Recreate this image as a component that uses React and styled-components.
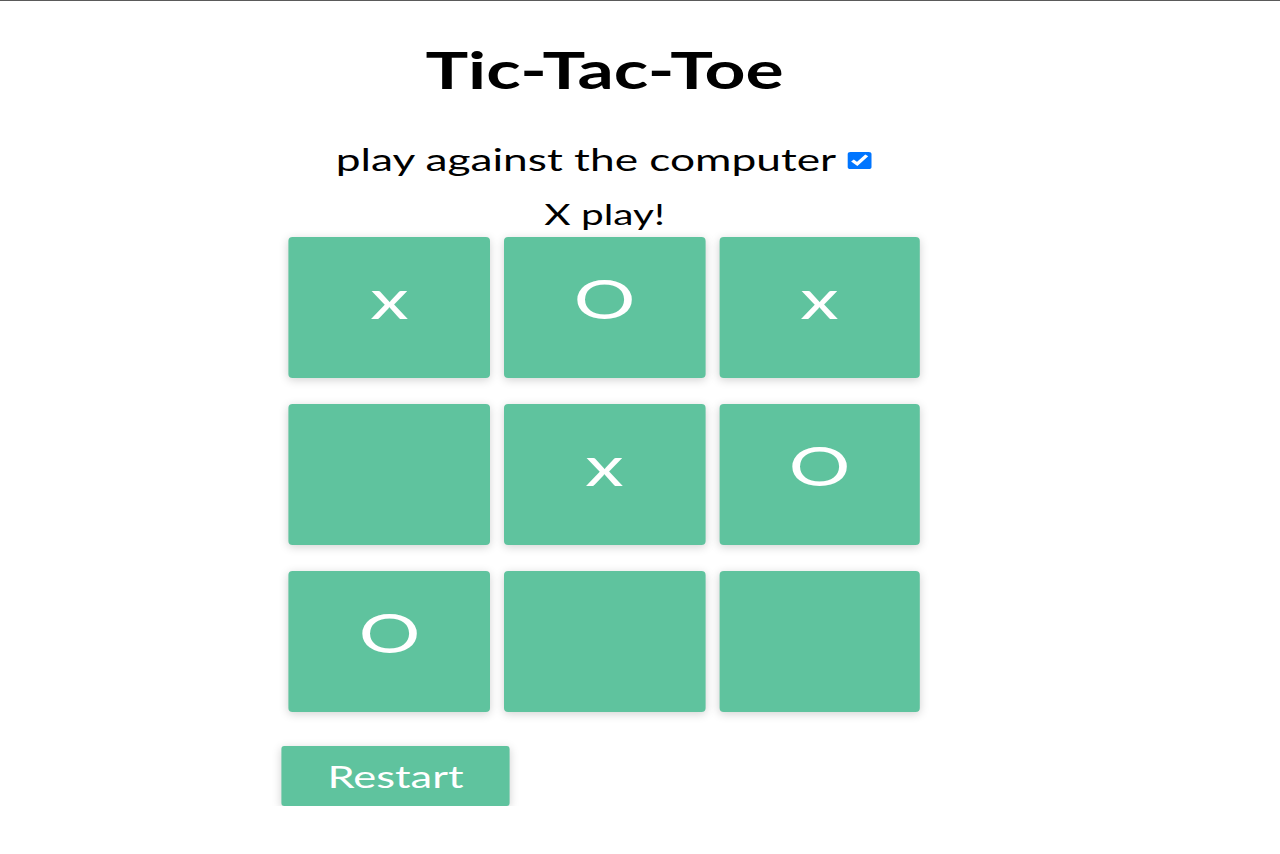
import styled, { createGlobalStyle } from 'styled-components';
import { useState } from 'react';

const GlobalStyle = createGlobalStyle`
    html, body {
        margin: 0;
        padding: 0;
        background: #fff;
    }
    body {
        border-top: 1px solid #5a5a5a;
        font-family: Lato, "Open Sans", sans-serif;
        color: #000;
        overflow: hidden;
    }
`

const startBoard = ['x', 'O', 'x', '', 'x', 'O', 'O', '', ''];

const App = () => {
    const [board, setBoard] = useState(startBoard);
    const [vsComputer, setVsComputer] = useState(true);

    function play(index) {
        if (board[index]) return;
        const next = [...board];
        next[index] = 'x';
        setBoard(next);
    }

    return (
        <Stage>
            <GlobalStyle />
            <Title>Tic-Tac-Toe</Title>
            <Option>
                play against the computer
                <input type="checkbox" checked={vsComputer} onChange={e => setVsComputer(e.target.checked)} />
            </Option>
            <Status>X play!</Status>
            <Game>
                <Board>
                    {board.map((value, i) => (
                        <Cell key={i} onClick={() => play(i)}>{value}</Cell>
                    ))}
                </Board>
                <RestartButton onClick={() => setBoard(Array(9).fill(''))}>Restart</RestartButton>
            </Game>
        </Stage>
    );
};

export default App;

// the page is drawn a little wide, as in the screenshot
const Stage = styled.div`
    display: flex;
    flex-direction: column;
    align-items: center;
    width: 863.6px;
    transform: scaleX(1.4);
    transform-origin: left top;
`

const Title = styled.h1`
    margin: 38px 0 0;
    font-size: 51px;
    font-weight: 700;
    line-height: normal;
`

const Option = styled.label`
    margin-top: 41px;
    font-size: 31.6px;
    line-height: 37px;
    display: flex;
    align-items: center;

    input {
        width: 19.5px;
        height: 17px;
        margin: 2px 0 0 7px;
    }
`

const Status = styled.div`
    margin-top: 18px;
    font-size: 29px;
    line-height: normal;
`

const Game = styled.div`
    width: 462.2px;
    margin-top: 6px;
    display: flex;
    flex-direction: column;
    align-items: flex-start;
`

const Board = styled.div`
    display: grid;
    grid-template-columns: repeat(3, 143.6px);
    column-gap: 10px;
    row-gap: 26px;
    padding: 0 5.7px;
`

const Cell = styled.div`
    box-sizing: border-box;
    height: 141px;
    padding-top: 28px;
    text-align: center;
    font-size: 55px;
    line-height: normal;
    color: #fff;
    background-color: #5fc39e;
    border-radius: 3px / 4px;
    box-shadow: 0 2px 8px rgba(0, 0, 0, 0.18);
    cursor: pointer;
`

const RestartButton = styled.button`
    margin-top: 34px;
    width: 163.6px;
    height: 60px;
    border: none;
    border-radius: 2px / 3px;
    background-color: #5fc39e;
    color: #fff;
    font-family: Lato, sans-serif;
    font-size: 31px;
    box-shadow: 0 2px 8px rgba(0, 0, 0, 0.18);
    cursor: pointer;
`
